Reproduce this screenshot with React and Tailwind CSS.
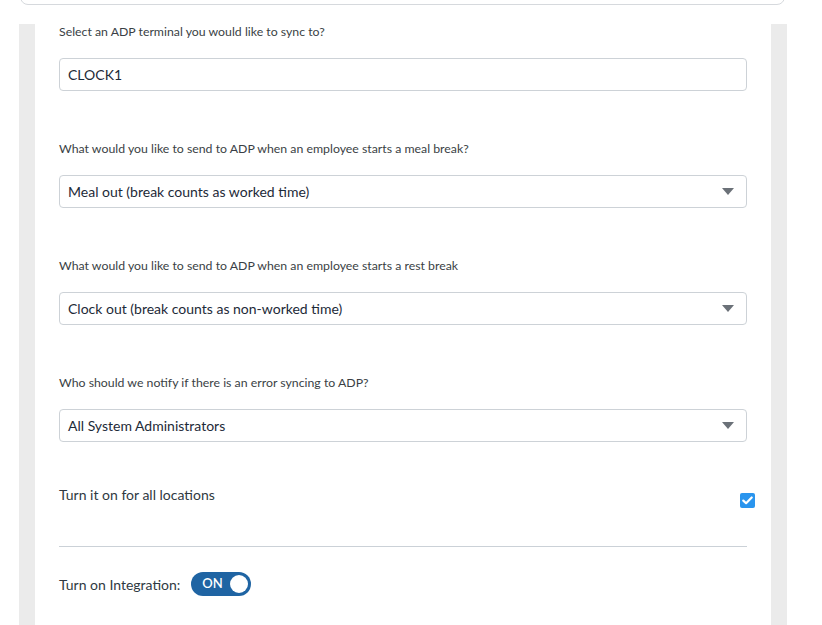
import { useState } from "react"

function Caret() {
  return (
    <svg width="12" height="7" viewBox="0 0 12 7" className="shrink-0">
      <path d="M0 0 L12 0 L6 7 Z" fill="#6b7178" />
    </svg>
  )
}

function Field({ label, value, select, last }) {
  return (
    <div className={last ? "mb-[45px]" : "mb-[50px]"}>
      <p className="text-[12.3px] leading-4 text-[#3a3f45]">{label}</p>
      <div className="mt-[18px] flex h-[33px] items-center justify-between rounded-[4px] border border-[#cdd2d7] bg-white pl-[8px] pr-[12px]">
        <span className="text-[14px] text-[#1d2a38]">{value}</span>
        {select && <Caret />}
      </div>
    </div>
  )
}

export default function App() {
  const [allLocations, setAllLocations] = useState(true)
  const [enabled, setEnabled] = useState(true)

  return (
    <div className="h-[625px] w-[822px] overflow-hidden bg-white font-['Lato',sans-serif]">
      {/* previous card edge */}
      <div className="mx-[20px] mr-[37px] -mt-[20px] h-[25px] rounded-b-[8px] border border-[#d6d9dd] bg-white" />

      <div className="ml-[19px] mr-[35px] mt-[19px] h-[620px] bg-[#ebebeb] px-[16px]">
        <div className="h-full bg-white px-[24px] pt-0">
          <Field label="Select an ADP terminal you would like to sync to?" value="CLOCK1" />
          <Field
            label="What would you like to send to ADP when an employee starts a meal break?"
            value="Meal out (break counts as worked time)"
            select
          />
          <Field
            label="What would you like to send to ADP when an employee starts a rest break"
            value="Clock out (break counts as non-worked time)"
            select
          />
          <Field
            label="Who should we notify if there is an error syncing to ADP?"
            value="All System Administrators"
            select
            last
          />

          <div className="-mr-[8px] flex items-start justify-between">
            <span className="text-[14px] leading-4 text-[#2f3942]">Turn it on for all locations</span>
            <button
              onClick={() => setAllLocations(!allLocations)}
              className={`mt-[6px] flex h-[15px] w-[15px] items-center justify-center rounded-[2px] ${allLocations ? "bg-[#2a95ee]" : "border border-gray-400 bg-white"}`}
            >
              {allLocations && (
                <svg width="11" height="9" viewBox="0 0 11 9">
                  <path d="M1.3 4.6 L4.1 7.2 L9.7 1.5" fill="none" stroke="white" strokeWidth="2.2" strokeLinecap="round" strokeLinejoin="round" />
                </svg>
              )}
            </button>
          </div>

          <div className="mt-[38px] h-px bg-[#cbd1d7]" />

          <div className="mt-[25px] flex items-center gap-[11px]">
            <span className="text-[14px] text-[#2f3942]">Turn on Integration:</span>
            <button
              onClick={() => setEnabled(!enabled)}
              className="flex h-[24px] w-[60px] items-center justify-between rounded-full bg-[#1f64a3] pl-[11px] pr-[3px]"
            >
              <span className="text-[13px] font-semibold text-white">ON</span>
              <span className="h-[18px] w-[18px] rounded-full bg-white" />
            </button>
          </div>
        </div>
      </div>
    </div>
  )
}
